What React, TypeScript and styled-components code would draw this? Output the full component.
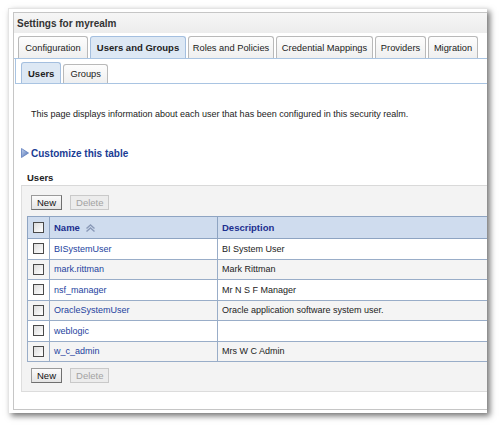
import React from 'react';
import styled, { createGlobalStyle } from 'styled-components';

const GlobalStyle = createGlobalStyle`
  html, body {
    margin: 0;
    padding: 0;
    background: #ffffff;
  }
  body {
    font-family: "Liberation Sans", Arial, sans-serif;
    font-size: 9px;
    color: #222;
  }
`;

const Page = styled.div`
  padding: 8px 0 0 8px;
  height: 429px;
  box-sizing: border-box;
  overflow: hidden;
`;

const Frame = styled.div`
  width: 479px;
  height: 405px;
  box-sizing: border-box;
  background: #fff;
  border-top: 1px solid #e4e4e4;
  border-left: 1px solid #e4e4e4;
  box-shadow: 3px 3px 6px rgba(0, 0, 0, 0.55);
  padding: 3px 0 0 4px;
`;

const Panel = styled.div`
  height: 398px;
  box-sizing: border-box;
  border: 1px solid #c6c6c6;
  border-right: none;
  overflow: hidden;
  display: flex;
  flex-direction: column;
`;

const TitleBar = styled.div`
  height: 20px;
  flex: none;
  display: flex;
  align-items: center;
  padding-left: 3px;
  background: linear-gradient(#f6f6f6, #ececec);
  font-size: 10px;
  font-weight: bold;
  color: #333;
`;

const TabStrip = styled.div`
  display: flex;
  align-items: flex-end;
  gap: 2px;
  padding: 3px 0 0 4px;
  flex: none;
  border-bottom: 1px solid #a9c4e2;
`;

const Tab = styled.div<{ $active?: boolean; $w: number }>`
  width: ${p => p.$w}px;
  height: 22px;
  box-sizing: border-box;
  display: flex;
  align-items: center;
  justify-content: center;
  border: 1px solid ${p => (p.$active ? '#a4bfdf' : '#b9b9b9')};
  border-bottom: none;
  border-radius: 3px 3px 0 0;
  background: ${p => (p.$active ? '#dde8f4' : 'linear-gradient(#fdfdfd, #efefef)')};
  font-size: ${p => (p.$active ? '9.5px' : '9.3px')};
  font-weight: ${p => (p.$active ? 'bold' : 'normal')};
  color: #222;
  white-space: nowrap;
`;

const SubPanel = styled.div`
  margin-left: 1px;
  flex: none;
  display: flex;
  align-items: flex-end;
  gap: 2px;
  padding: 3px 0 0 5px;
  border-left: 1px solid #a9c4e2;
  border-bottom: 1px solid #a9c4e2;
`;

const SubTab = styled.div<{ $active?: boolean }>`
  height: ${p => (p.$active ? '21px' : '19px')};
  box-sizing: border-box;
  display: flex;
  align-items: center;
  padding: 0 6px;
  border: 1px solid ${p => (p.$active ? '#a4bfdf' : '#b9b9b9')};
  border-bottom: none;
  border-radius: 3px 3px 0 0;
  background: ${p => (p.$active ? '#dde8f4' : 'linear-gradient(#fdfdfd, #efefef)')};
  font-size: ${p => (p.$active ? '9.5px' : '9.3px')};
  font-weight: ${p => (p.$active ? 'bold' : 'normal')};
  color: #222;
`;

const Body = styled.div`
  padding-left: 7px;
  display: flex;
  flex-direction: column;
`;

const Intro = styled.p`
  margin: 24px 0 0 10px;
  line-height: 12px;
  white-space: nowrap;
`;

const Customize = styled.div`
  margin-top: 27px;
  display: flex;
  align-items: center;
  gap: 2px;
  height: 12px;
  font-size: 10px;
  font-weight: bold;
  color: #1a3c94;
`;

const SectionTitle = styled.div`
  margin: 13px 0 0 6px;
  height: 12px;
  line-height: 12px;
  font-size: 9.5px;
  font-weight: bold;
  color: #222;
`;

const TableBox = styled.div`
  margin-top: 1px;
  background: #f3f3f3;
  border-top: 1px solid #d9d9d9;
  border-left: 1px solid #dedede;
  border-bottom: 1px solid #dcdcdc;
  padding: 9px 0 8px 0;
  width: 560px;
`;

const ButtonRow = styled.div`
  display: flex;
  gap: 8px;
  padding-left: 9px;
`;

const Button = styled.div<{ $disabled?: boolean }>`
  height: 15px;
  box-sizing: border-box;
  display: flex;
  align-items: center;
  justify-content: center;
  padding: 0 5px;
  font-size: 9.5px;
  color: ${p => (p.$disabled ? '#a2a2a2' : '#111')};
  border: 1px solid ${p => (p.$disabled ? '#c9c9c9' : '#9a9a9a')};
  border-right-color: ${p => (p.$disabled ? '#c9c9c9' : '#6f6f6f')};
  border-bottom-color: ${p => (p.$disabled ? '#c9c9c9' : '#6f6f6f')};
  background: ${p => (p.$disabled ? '#ececec' : 'linear-gradient(#fbfbfb, #e4e4e4)')};
`;

const Table = styled.table`
  margin: 6px 0 6px 5px;
  border-collapse: collapse;
  width: 530px;
  table-layout: fixed;
  border: 1px solid #8ea4c2;
`;

const Col = styled.col<{ $w?: number }>`
  width: ${p => (p.$w ? `${p.$w}px` : 'auto')};
`;

const Th = styled.th<{ $narrow?: boolean }>`
  height: 21px;
  padding: ${p => (p.$narrow ? '0' : '0 4px')};
  text-align: left;
  background: #cfdcee;
  border: 1px solid #8ea4c2;
  font-size: 9.5px;
  font-weight: bold;
  color: #1c2f8e;
  white-space: nowrap;
`;

const Row = styled.tr`
  background: #ffffff;
  &:nth-child(even) {
    background: #f4f4f4;
  }
`;

const Td = styled.td<{ $narrow?: boolean }>`
  height: 19.5px;
  padding: ${p => (p.$narrow ? '0' : '0 4px')};
  border: 1px solid #99adc8;
  white-space: nowrap;
  font-size: 9px;
  color: #222;
`;

const CheckCell = styled.div`
  display: flex;
  justify-content: center;
`;

const Check = styled.span`
  display: block;
  width: 11px;
  height: 11px;
  box-sizing: border-box;
  border: 1px solid #4a4a4a;
  background: linear-gradient(135deg, #dcdcdc, #ffffff);
`;

const UserLink = styled.span`
  color: #1d3f9e;
`;

const HeadLabel = styled.span`
  display: inline-flex;
  align-items: center;
  gap: 5px;
`;

const users = [
  { name: 'BISystemUser', desc: 'BI System User' },
  { name: 'mark.rittman', desc: 'Mark Rittman' },
  { name: 'nsf_manager', desc: 'Mr N S F Manager' },
  { name: 'OracleSystemUser', desc: 'Oracle application software system user.' },
  { name: 'weblogic', desc: '' },
  { name: 'w_c_admin', desc: 'Mrs W C Admin' },
];

const tabs = [
  { label: 'Configuration', w: 70 },
  { label: 'Users and Groups', w: 96 },
  { label: 'Roles and Policies', w: 86 },
  { label: 'Credential Mappings', w: 97 },
  { label: 'Providers', w: 51 },
  { label: 'Migration', w: 50 },
];

const Triangle = () => (
  <svg width="8" height="10" viewBox="0 0 8 10">
    <defs>
      <linearGradient id="tri" x1="0" y1="0" x2="1" y2="1">
        <stop offset="0" stopColor="#c4d4ee" />
        <stop offset="1" stopColor="#4e6fb4" />
      </linearGradient>
    </defs>
    <polygon points="0.5,0.5 7.5,5 0.5,9.5" fill="url(#tri)" stroke="#5d7cbc" strokeWidth="0.8" />
  </svg>
);

const SortIcon = () => (
  <svg width="11" height="8" viewBox="0 0 11 8">
    <polyline points="1.5,4.5 5.5,1 9.5,4.5" fill="none" stroke="#8a9ab8" strokeWidth="1.4" />
    <polyline points="1.5,7.5 5.5,4 9.5,7.5" fill="none" stroke="#8a9ab8" strokeWidth="1.4" />
  </svg>
);

const Buttons = () => (
  <ButtonRow>
    <Button>New</Button>
    <Button $disabled>Delete</Button>
  </ButtonRow>
);

export default function App() {
  return (
    <Page>
      <GlobalStyle />
      <Frame>
        <Panel>
          <TitleBar>Settings for myrealm</TitleBar>
          <TabStrip>
            {tabs.map(t => (
              <Tab key={t.label} $w={t.w} $active={t.label === 'Users and Groups'}>{t.label}</Tab>
            ))}
          </TabStrip>
          <SubPanel>
            <SubTab $active>Users</SubTab>
            <SubTab>Groups</SubTab>
          </SubPanel>
          <Body>
            <Intro>This page displays information about each user that has been configured in this security realm.</Intro>
            <Customize>
              <Triangle />
              Customize this table
            </Customize>
            <SectionTitle>Users</SectionTitle>
            <TableBox>
              <Buttons />
              <Table>
                <colgroup>
                  <Col $w={22} />
                  <Col $w={168} />
                  <Col />
                </colgroup>
                <thead>
                  <tr>
                    <Th $narrow><CheckCell><Check /></CheckCell></Th>
                    <Th>
                      <HeadLabel>Name <SortIcon /></HeadLabel>
                    </Th>
                    <Th>Description</Th>
                  </tr>
                </thead>
                <tbody>
                  {users.map(u => (
                    <Row key={u.name}>
                      <Td $narrow><CheckCell><Check /></CheckCell></Td>
                      <Td><UserLink>{u.name}</UserLink></Td>
                      <Td>{u.desc}</Td>
                    </Row>
                  ))}
                </tbody>
              </Table>
              <Buttons />
            </TableBox>
          </Body>
        </Panel>
      </Frame>
    </Page>
  );
}
